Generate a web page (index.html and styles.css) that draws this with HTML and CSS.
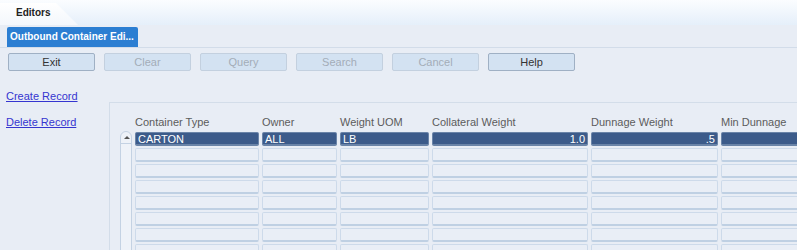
FILE: index.html
```html
<!DOCTYPE html>
<html lang="en">
<head>
    <meta charset="UTF-8">
    <meta name="viewport" content="width=device-width, initial-scale=1.0">
    <title>Editors - Outbound Container Editor</title>
    <link rel="stylesheet" href="styles.css">
</head>
<body>
    <div class="tabbar">
        <div class="tab">Editors</div>
    </div>

    <div class="title-row">
        <span class="form-title">Outbound Container Edi...</span>
    </div>

    <div class="toolbar">
        <button class="tool">Exit</button>
        <button class="tool" disabled>Clear</button>
        <button class="tool" disabled>Query</button>
        <button class="tool" disabled>Search</button>
        <button class="tool" disabled>Cancel</button>
        <button class="tool">Help</button>
    </div>

    <div class="content">
        <div class="links">
            <a href="#">Create Record</a>
            <a href="#">Delete Record</a>
        </div>

        <div class="panel">
            <div class="grid">
                <div class="head-spacer"></div>
                <div class="col-head">Container Type</div>
                <div class="col-head">Owner</div>
                <div class="col-head">Weight UOM</div>
                <div class="col-head">Collateral Weight</div>
                <div class="col-head">Dunnage Weight</div>
                <div class="col-head">Min Dunnage</div>

                <div class="scrollbar"><span class="arrow"></span></div>

                <div class="cell selected">CARTON</div>
                <div class="cell selected">ALL</div>
                <div class="cell selected">LB</div>
                <div class="cell selected num">1.0</div>
                <div class="cell selected num">.5</div>
                <div class="cell selected"></div>
            </div>
        </div>
    </div>

    <script>
        // fill the empty rows of the table
        const grid = document.querySelector(".grid");
        for (let r = 0; r < 7; r++) {
            for (let c = 0; c < 6; c++) {
                const cell = document.createElement("div");
                cell.className = "cell";
                grid.appendChild(cell);
            }
        }
    </script>
</body>
</html>
```

FILE: styles.css
```css
body {
    font-family: "Liberation Sans", Arial, sans-serif;
    font-size: 11px;
    background-color: #e8edf5;
    margin: 0;
    padding: 0;
    height: 250px;
    overflow: hidden;
    color: #333;
}
.tabbar {
    height: 25px;
    background: linear-gradient(#fbfdff, #e5effa);
    display: flex;
    align-items: flex-end;
}
.tab {
    width: 78px;
    height: 22px;
    box-sizing: border-box;
    padding: 4px 0 0 16px;
    font-size: 10px;
    font-weight: bold;
    color: #222;
    background: linear-gradient(#ffffff, #f3f7fc);
    clip-path: polygon(0 0, 56px 0, 78px 100%, 0 100%);
}
.title-row {
    padding: 2px 7px 0;
    height: 20px;
    border-bottom: 1px solid #d2dce9;
}
.form-title {
    display: inline-block;
    height: 20px;
    line-height: 20px;
    padding: 0 4px 0 3px;
    background-color: #2b7ed2;
    color: #fff;
    font-size: 10px;
    font-weight: bold;
    border-radius: 2px 2px 0 0;
}
.toolbar {
    display: flex;
    gap: 9px;
    padding: 5px 8px 0;
}
.tool {
    width: 87px;
    height: 18px;
    padding: 0;
    font-family: inherit;
    font-size: 11px;
    color: #333;
    background-color: #d3e2f2;
    border: 1px solid #9fb0c4;
    border-radius: 2px;
}
.tool:disabled {
    color: #a3adb8;
    border-color: #c3d0df;
}
.content {
    display: flex;
}
.links {
    width: 109px;
    flex-shrink: 0;
    display: flex;
    flex-direction: column;
    gap: 13px;
    padding: 19px 0 0 6px;
    box-sizing: border-box;
}
.links a {
    color: #3535d0;
    line-height: 13px;
}
.panel {
    flex: 1;
    margin-top: 31px;
    height: 135px;
    overflow: hidden;
    border-top: 1px solid #d3dde9;
    border-left: 1px solid #d3dde9;
    padding: 13px 0 0 10px;
}
.grid {
    display: grid;
    grid-template-columns: 12px 124px 75px 89px 156px 127px 100px;
    grid-auto-rows: 14px;
    column-gap: 3px;
    row-gap: 2px;
}
.col-head {
    color: #5c5c5c;
    line-height: 13px;
    height: 13px;
    margin-bottom: 1px;
}
.head-spacer {
    grid-column: 1;
}
.scrollbar {
    grid-column: 1;
    grid-row: 2 / span 8;
    margin-top: -1px;
    border: 1px solid #c4d2e3;
    border-radius: 6px 6px 0 0;
    background-color: #eef2f8;
}
.arrow {
    display: block;
    height: 11px;
    border-bottom: 1px solid #c4d2e3;
    position: relative;
}
.arrow::after {
    content: "";
    position: absolute;
    left: 3px;
    top: 4px;
    border-left: 3px solid transparent;
    border-right: 3px solid transparent;
    border-bottom: 3px solid #555;
}
.cell {
    box-sizing: border-box;
    background-color: #e9eef6;
    border: 1px solid #cddaea;
    border-bottom: 2px solid #bfd0e3;
    border-radius: 2px;
    line-height: 12px;
    padding: 0 2px;
    white-space: nowrap;
}
.cell.selected {
    background-color: #3c5b8a;
    border-color: #6a84a8;
    color: #fff;
}
.cell.num {
    text-align: right;
}
```
